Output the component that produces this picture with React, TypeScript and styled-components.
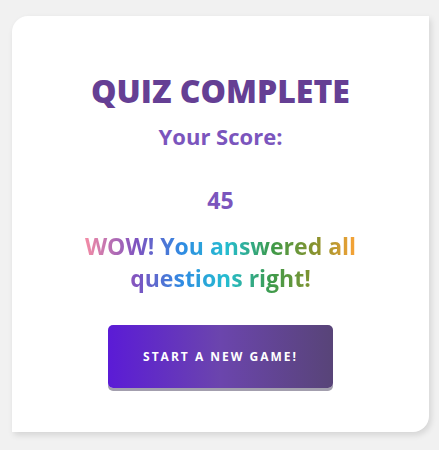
import React from "react";
import styled, { createGlobalStyle } from "styled-components";

const Global = createGlobalStyle`
  html, body { margin: 0; padding: 0; background: #f1f1f1; }
  body { font-family: "Open Sans", "DejaVu Sans", sans-serif; }
`;

const Page = styled.div`
  padding: 16px 10px 18px 12px;
`;

const Card = styled.div`
  width: 417px;
  height: 416px;
  box-sizing: border-box;
  background: #ffffff;
  border-radius: 16px 0 16px 0;
  box-shadow: 2px 3px 6px rgba(0, 0, 0, 0.12);
  display: flex;
  flex-direction: column;
  align-items: center;
  padding-top: 55px;
`;

const Title = styled.h1`
  margin: 0;
  font-size: 32px;
  line-height: 40px;
  font-weight: 800;
  color: #653f94;
`;

const Subtitle = styled.h2`
  margin: 10px 0 0;
  font-size: 22px;
  line-height: 30px;
  font-weight: 700;
  color: #7b55bd;
`;

const Score = styled.div`
  margin-top: 34px;
  font-size: 23px;
  line-height: 30px;
  font-weight: 700;
  color: #7b55bd;
`;

const Message = styled.p`
  margin: 15px 0 0;
  max-width: 280px;
  text-align: center;
  font-size: 23px;
  line-height: 32px;
  font-weight: 700;
  background: linear-gradient(
    to right,
    #f08aa6 2%,
    #7d52c0 20%,
    #2f8be3 36%,
    #25bdd0 52%,
    #3d9a4a 68%,
    #8f922c 85%,
    #f2a236 97%
  );
  -webkit-background-clip: text;
  background-clip: text;
  color: transparent;
`;

const Button = styled.button`
  margin-top: 31px;
  width: 225px;
  height: 63px;
  border: none;
  border-radius: 5px;
  background: linear-gradient(to right, #5b1bd6 0%, #6b45ad 50%, #584478 100%);
  box-shadow: 0 3px 0 #a39fae;
  color: #ffffff;
  font-family: inherit;
  font-size: 12px;
  font-weight: 700;
  letter-spacing: 2px;
  text-transform: uppercase;
  cursor: pointer;
`;

export default function App() {
  return (
    <>
      <Global />
      <Page>
        <Card>
          <Title>QUIZ COMPLETE</Title>
          <Subtitle>Your Score:</Subtitle>
          <Score>45</Score>
          <Message>WOW! You answered all questions right!</Message>
          <Button>Start a new game!</Button>
        </Card>
      </Page>
    </>
  );
}
